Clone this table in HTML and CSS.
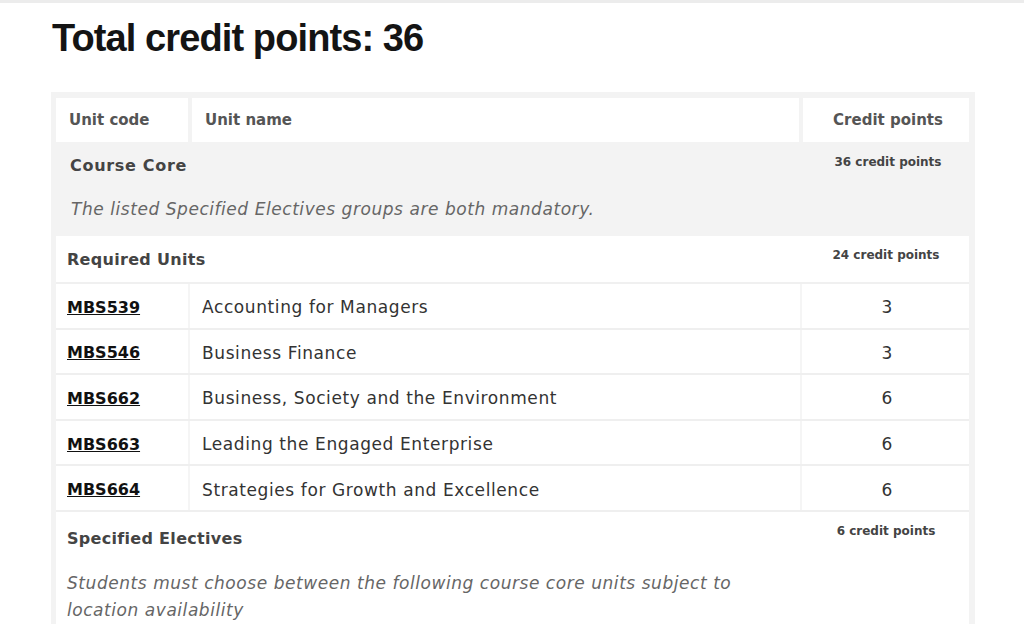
FILE: index.html
```html
<!DOCTYPE html>
<html>
<head>
<meta charset="utf-8">
<link rel="stylesheet" href="styles.css">
</head>
<body>
<div class="topline"></div>
<h1 class="title">Total credit points: 36</h1>
<div class="frame">
  <div class="head">
    <div class="hcell">Unit code</div>
    <div class="hcell">Unit name</div>
    <div class="hcell center">Credit points</div>
  </div>
  <div class="core">
    <div class="sechead">
      <span class="secname core-name">Course Core</span>
      <span class="secpts">36 credit points</span>
    </div>
    <p class="note core-note">The listed Specified Electives groups are both mandatory.</p>
  </div>
  <div class="group">
    <div class="grouphead">
      <span class="secname">Required Units</span>
      <span class="secpts">24 credit points</span>
    </div>
    <div class="row"><a class="code">MBS539</a><span class="name">Accounting for Managers</span><span class="pts">3</span></div>
    <div class="row"><a class="code">MBS546</a><span class="name">Business Finance</span><span class="pts">3</span></div>
    <div class="row"><a class="code">MBS662</a><span class="name">Business, Society and the Environment</span><span class="pts">6</span></div>
    <div class="row"><a class="code">MBS663</a><span class="name">Leading the Engaged Enterprise</span><span class="pts">6</span></div>
    <div class="row"><a class="code">MBS664</a><span class="name">Strategies for Growth and Excellence</span><span class="pts">6</span></div>
  </div>
  <div class="group elect">
    <div class="grouphead">
      <span class="secname">Specified Electives</span>
      <span class="secpts">6 credit points</span>
    </div>
    <p class="note">Students must choose between the following course core units subject to<br>location availability</p>
  </div>
</div>
</body>
</html>
```
FILE: styles.css
```css
html, body {
  margin: 0;
  padding: 0;
  background: #ffffff;
  font-family: "DejaVu Sans", "Open Sans", sans-serif;
  height: 632px;
  overflow: hidden;
}
.topline {
  height: 3px;
  background: #ececec;
}
.title {
  margin: 13px 0 0 52px;
  font-family: "Liberation Sans", sans-serif;
  font-weight: 700;
  font-size: 38px;
  line-height: 44px;
  color: #141414;
  letter-spacing: -0.9px;
}
.frame {
  margin: 32px 0 0 51px;
  width: 924px;
  background: #f3f3f3;
  padding: 6px 6px 0 5px;
  box-sizing: border-box;
}
.head {
  display: grid;
  grid-template-columns: 132px 1fr 166px;
  column-gap: 4px;
}
.hcell {
  background: #fff;
  height: 44px;
  display: flex;
  align-items: center;
  padding-left: 13px;
  font-size: 15px;
  font-weight: 700;
  color: #555;
}
.hcell.center {
  justify-content: center;
  padding-left: 4px;
}
.core {
  height: 94px;
  box-sizing: border-box;
  padding: 10px 0 0 14px;
}
.sechead, .grouphead {
  display: flex;
  justify-content: space-between;
  align-items: flex-start;
}
.secname {
  font-size: 16px;
  font-weight: 700;
  color: #444;
  line-height: 28px;
  letter-spacing: 0.3px;
}
.core-name {
  letter-spacing: 0.7px;
}
.secpts {
  width: 166px;
  text-align: center;
  font-size: 12px;
  font-weight: 700;
  color: #444;
  line-height: 20px;
}
.core .secpts {
  padding-left: 4px;
  box-sizing: border-box;
}
.note {
  margin: 0;
  font-style: italic;
  font-size: 17px;
  color: #666;
  line-height: 27px;
  letter-spacing: 0.55px;
}
.core-note {
  margin-top: 16px;
  padding-left: 1px;
}
.group {
  background: #fff;
}
.grouphead {
  height: 48px;
  box-sizing: border-box;
  padding: 10px 0 0 11px;
  border-bottom: 2px solid #f0f0f0;
}
.grouphead .secpts {
  margin-top: -1px;
}
.row {
  display: grid;
  grid-template-columns: 134px 1fr 167px;
  height: 45.6px;
  box-sizing: border-box;
  border-bottom: 2px solid #efefef;
  align-items: center;
}
.row > * {
  height: 100%;
  box-sizing: border-box;
  padding-top: 3px;
  display: flex;
  align-items: center;
}
.code {
  padding-left: 11px;
  font-weight: 700;
  font-size: 16px;
  color: #111;
  text-decoration: underline;
  border-right: 2px solid #f5f5f5;
}
.name {
  padding-left: 12px;
  font-size: 17px;
  color: #333;
  letter-spacing: 0.6px;
  border-right: 2px solid #f5f5f5;
}
.pts {
  justify-content: center;
  font-size: 17px;
  color: #333;
  padding-left: 3px;
}
.elect .grouphead {
  border-bottom: none;
  height: 58px;
  padding-top: 13px;
}
.elect .secpts {
  margin-top: -4px;
}
.elect .note {
  padding-left: 11px;
}
```
